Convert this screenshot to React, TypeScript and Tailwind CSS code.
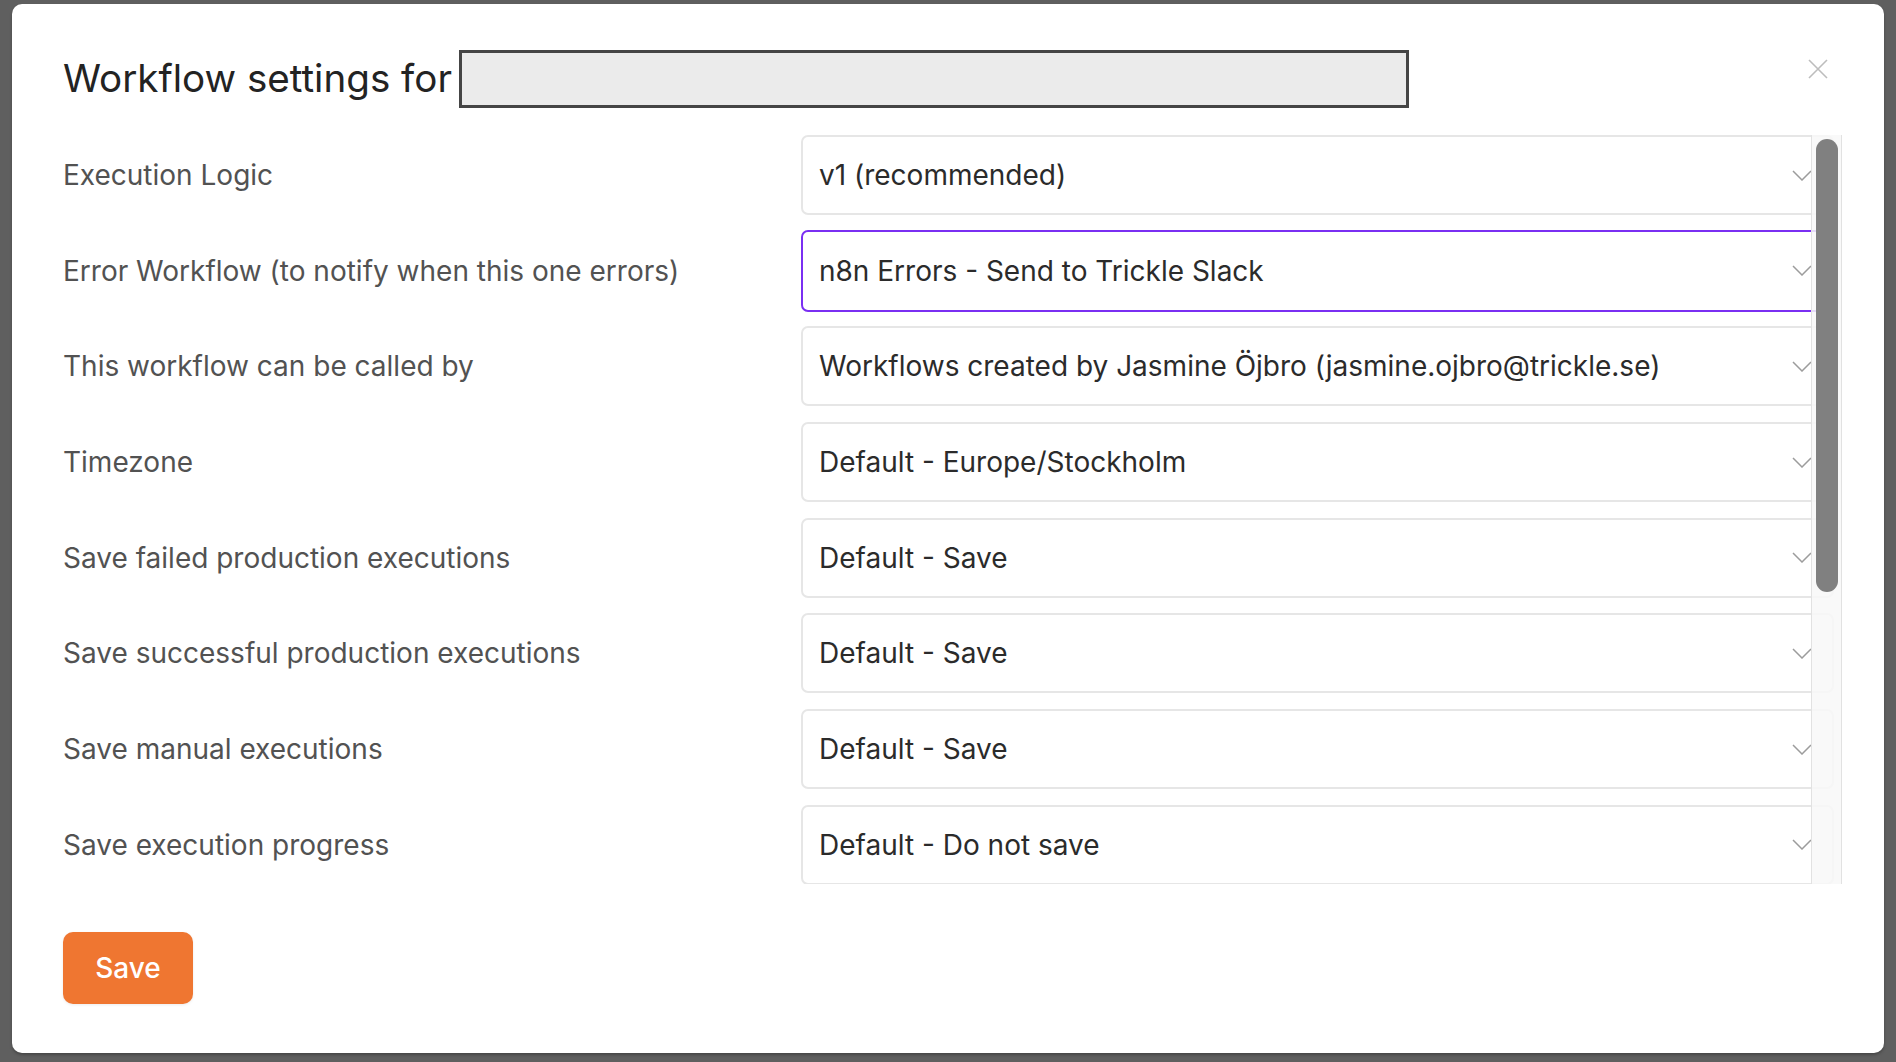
const rows = [
  { label: "Execution Logic", value: "v1 (recommended)" },
  { label: "Error Workflow (to notify when this one errors)", value: "n8n Errors - Send to Trickle Slack", focused: true },
  { label: "This workflow can be called by", value: "Workflows created by Jasmine Öjbro (jasmine.ojbro@trickle.se)" },
  { label: "Timezone", value: "Default - Europe/Stockholm" },
  { label: "Save failed production executions", value: "Default - Save" },
  { label: "Save successful production executions", value: "Default - Save" },
  { label: "Save manual executions", value: "Default - Save" },
  { label: "Save execution progress", value: "Default - Do not save" },
];

function Chevron() {
  return (
    <svg width="20" height="11" viewBox="0 0 20 11" fill="none" className="block shrink-0">
      <path d="M1 1 L10 10 L19 1" stroke="#9c9c9c" strokeWidth="1.5" />
    </svg>
  );
}

function SelectBox({ value, focused }: { value: string; focused?: boolean }) {
  return (
    <div
      className={
        "flex flex-1 items-center justify-between rounded-[7px] border-2 bg-white pl-[16px] pr-[20px] " +
        (focused ? "-my-[1px] h-[82px] border-[#7a2ff2]" : "h-[80px] border-[#e6e6e6]")
      }
    >
      <span className="text-[28px] text-[#2b2b2b]">{value}</span>
      <Chevron />
    </div>
  );
}

export default function App() {
  return (
    <div className="h-[1062px] w-full overflow-hidden bg-[#5f5f5f] pl-[12px] pt-[4px] font-['Inter','Liberation_Sans',sans-serif]">
      <div className="relative flex h-[1049px] w-[1872px] flex-col rounded-[10px] bg-white pl-[51px] pr-[42px] pt-[46px] shadow-[0_2px_3px_rgba(0,0,0,0.25)]">
        <button className="absolute right-[56px] top-[55px] block">
          <svg width="20" height="20" viewBox="0 0 20 20" className="block">
            <path d="M1 1 L19 19 M19 1 L1 19" stroke="#bdbdbd" strokeWidth="1.6" />
          </svg>
        </button>

        <div className="flex h-[57px] items-center gap-[7px]">
          <h1 className="text-[38.6px] leading-none text-[#232323]">Workflow settings for</h1>
          <div className="h-[58px] w-[950px] border-[3px] border-[#454545] bg-[#ebebeb]" />
        </div>

        <div className="relative mt-[28px] h-[749px] overflow-hidden">
          <div className="flex flex-col gap-[15.7px] pr-[8px]">
            {rows.map((r) => (
              <div key={r.label} className="flex items-center">
                <div className="w-[738px] shrink-0 text-[28px] text-[#525252]">{r.label}</div>
                <SelectBox value={r.value} focused={r.focused} />
              </div>
            ))}
          </div>
          <div className="absolute bottom-0 right-0 top-0 w-[31px] border-x border-[#e2e2e2] bg-[#f8f8f8]/85">
            <div className="absolute left-[4px] top-[4px] h-[453px] w-[22px] rounded-full bg-[#808080]" />
          </div>
        </div>

        <button className="mt-[48px] flex h-[72px] w-[130px] items-center justify-center rounded-[10px] bg-[#ef7631] text-[28px] font-medium text-white shadow-[0_1px_3px_rgba(0,0,0,0.08)]">
          Save
        </button>
      </div>
    </div>
  );
}
